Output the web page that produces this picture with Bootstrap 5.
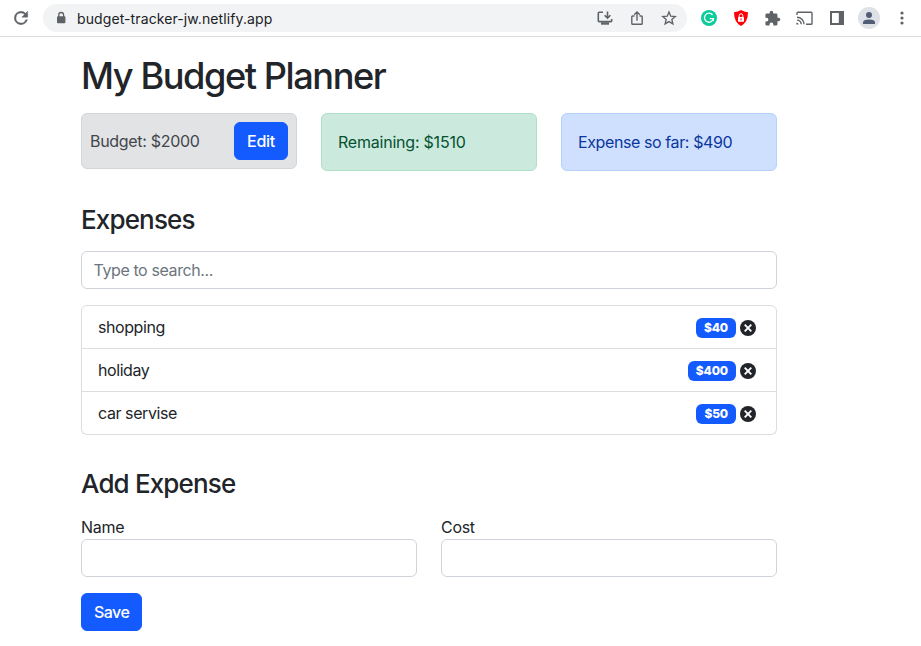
<!DOCTYPE html>
<html lang="en">
<head>
<meta charset="utf-8">
<meta name="viewport" content="width=device-width, initial-scale=1">
<title>My Budget Planner</title>
<link href="https://cdn.jsdelivr.net/npm/bootstrap@5.3.0/dist/css/bootstrap.min.css" rel="stylesheet">
<style>
body{font-family:Inter,"Liberation Sans",sans-serif;font-size:16px;color:#212529;letter-spacing:-.3px;overflow:hidden}
.browser-bar{height:37px;border-bottom:1px solid #dadce0;color:#5f6368;padding-left:11px}
.browser-bar svg{display:block;flex:none}
.address{width:644px;height:28px;margin:0 14px 0 12px;background:#f1f3f4;padding:0 10px}
.address-text{font-size:14px;color:#202124;letter-spacing:.1px;margin-left:8px}
.extensions{gap:15px}
.shield{margin-left:1px}
.profile{width:22px;height:22px;background:#dee1e6;margin:0 -1px 0 -2px}
.panel-icon{margin-left:1px}
.planner{width:720px;max-width:720px;margin-left:69px}
.planner-title{font-size:36.2px;line-height:43px;font-weight:540;letter-spacing:-1.45px;margin:18px 0 15px}
.section-title{font-size:26px;line-height:32px;font-weight:540;letter-spacing:-.85px;margin:33px 0 15px}
.box{border-radius:6px;margin:0;border:1px solid}
.box-budget{background:#e2e3e5;border-color:#d3d6d8;color:#41464b;padding:8px;height:56px}
.box-left{background:#cce9dd;border-color:#b0dfc9;color:#055130;height:58px;letter-spacing:-.22px}
.box-spent{background:#cfe0ff;border-color:#b3d1ff;color:#0a369d;height:58px;letter-spacing:-.4px}
.btn-primary{--bs-btn-bg:#145bff;--bs-btn-border-color:#145bff;font-weight:500;letter-spacing:-.55px}
.btn-edit{width:54px;letter-spacing:-.3px}
.btn,.form-control{height:38px;border-radius:6px}
.form-control{border-color:#ced4da;letter-spacing:-.4px;padding-left:11.5px}
.form-control::placeholder{color:#6c757d}
.list-group{--bs-list-group-border-color:#dcdddf;--bs-list-group-border-radius:6px}
.list-group-item{height:43px;padding:8px 20px 8px 16px;color:#212529;letter-spacing:-.42px}
.list-group-item:first-child,.list-group-item:last-child{height:43.5px}
.item-cost{padding-top:2px}
.cost-pill{background:#145bff;font-size:12px;font-weight:800;height:20px;line-height:12px;padding:4px 8px;border-radius:6px;letter-spacing:-.15px}
.save-row{margin-top:16px}
</style>
</head>
<body>
<header class="browser-bar d-flex align-items-center">
  <svg width="20" height="20" viewBox="0 0 24 24" fill="currentColor"><path d="M17.65 6.35A7.95 7.95 0 0 0 12 4a8 8 0 1 0 7.73 10h-2.08A6 6 0 1 1 12 6c1.66 0 3.14.69 4.22 1.78L13 11h7V4z" stroke="currentColor" stroke-width=".5"/></svg>
  <div class="address rounded-pill d-flex align-items-center">
    <svg width="16" height="16" viewBox="0 0 16 16"><rect x="4" y="6.3" width="8.4" height="7" rx="1" fill="#5f6368"/><path d="M5.8 7V4.9a2.4 2.4 0 0 1 4.8 0V7" fill="none" stroke="#5f6368" stroke-width="1.3"/></svg>
    <span class="address-text">budget-tracker-jw.netlify.app</span>
    <div class="ms-auto d-flex align-items-center gap-3">
      <svg width="16" height="16" viewBox="0 0 16 16" fill="none" stroke="currentColor" stroke-width="1.6"><path d="M6 2.3H2.2Q1.3 2.3 1.3 3.2v7.6q0 .8.9.8h11.6q.9 0 .9-.8V9M10.5 1.5v6M7.6 5.2l2.9 2.9 2.9-2.9"/><path d="M4 13.5h8" stroke-width="2.4"/></svg>
      <svg width="16" height="16" viewBox="0 0 16 16" fill="none" stroke="currentColor" stroke-width="1.4"><path d="M5.5 6H3.6q-.8 0-.8.8v6.6q0 .8.8.8h8.8q.8 0 .8-.8V6.8q0-.8-.8-.8h-1.9M8 10.7V2.3M5.2 4.7 8 1.9l2.8 2.8"/></svg>
      <svg width="16" height="16" viewBox="0 0 16 16" fill="none" stroke="currentColor" stroke-width="1.35"><path d="m8 2 1.75 4.15 4.5.38-3.42 2.95 1.03 4.4L8 11.55l-3.86 2.33 1.03-4.4-3.42-2.95 4.5-.38z"/></svg>
    </div>
  </div>
  <div class="extensions d-flex align-items-center">
    <svg width="16" height="16" viewBox="0 0 16 16"><circle cx="8" cy="8" r="8" fill="#0bcb9b"/><path d="M11.6 5A4.5 4.5 0 1 0 12.4 8.7H8.8M12.4 8.7l-.1 2.3" fill="none" stroke="#fff" stroke-width="1.3"/></svg>
    <svg class="shield" width="16" height="16" viewBox="0 0 16 16"><path d="M8 0q3 1.8 7 2.2 0 10-7 13.8Q1 12.2 1 2.2 5 1.8 8 0z" fill="#ff0008"/><rect x="5" y="7" width="6" height="4.8" rx=".5" fill="#fff"/><path d="M6.2 7V5.6a1.8 1.8 0 0 1 3.6 0V7" fill="none" stroke="#fff"/><path d="M8 8.3v2" stroke="#ff0008"/></svg>
    <svg width="17" height="17" viewBox="0 0 24 24" fill="currentColor"><path d="M20.5 11H19V7a2 2 0 0 0-2-2h-4V3.5a2.5 2.5 0 0 0-5 0V5H4a2 2 0 0 0-2 2v3.8h1.5a2.7 2.7 0 0 1 0 5.4H2V20a2 2 0 0 0 2 2h3.8v-1.5a2.7 2.7 0 0 1 5.4 0V22H17a2 2 0 0 0 2-2v-4h1.5a2.5 2.5 0 0 0 0-5z"/></svg>
    <svg width="17" height="17" viewBox="0 0 17 17" fill="none" stroke="currentColor" stroke-width="1.4"><path d="M1 5V3q0-.8.8-.8h13.4q.8 0 .8.8v10.4q0 .8-.8.8H10M1 7.3a7 7 0 0 1 7 7M1 10.1a4.2 4.2 0 0 1 4.2 4.2"/><path d="M.4 12.4a2.1 2.1 0 0 1 2.1 2.1H.4z" fill="currentColor" stroke="none"/></svg>
    <svg class="panel-icon" width="16" height="16" viewBox="0 0 16 16" fill="currentColor"><path fill-rule="evenodd" d="M1 1h14v14H1zM3 3v10h6.8V3z"/></svg>
    <div class="profile rounded-circle d-flex align-items-center justify-content-center"><svg width="14" height="14" viewBox="0 0 14 14" fill="#515d75"><circle cx="7" cy="4" r="3"/><path d="M1 13v-1.8Q1 8.8 7 8.5q6 .3 6 2.7V13z"/></svg></div>
    <svg width="16" height="16" viewBox="0 0 16 16" fill="currentColor"><circle cx="8" cy="3" r="1.6"/><circle cx="8" cy="8" r="1.6"/><circle cx="8" cy="13" r="1.6"/></svg>
  </div>
</header>

<main class="container planner">
  <h1 class="planner-title">My Budget Planner</h1>
  <div class="row align-items-start">
    <div class="col-4"><div class="alert box box-budget d-flex align-items-center justify-content-between"><span>Budget: $2000</span><button class="btn btn-primary btn-edit" type="button">Edit</button></div></div>
    <div class="col-4"><div class="alert box box-left d-flex align-items-center"><span>Remaining: $1510</span></div></div>
    <div class="col-4"><div class="alert box box-spent d-flex align-items-center"><span>Expense so far: $490</span></div></div>
  </div>

  <h3 class="section-title">Expenses</h3>
  <input class="form-control mb-3" type="text" placeholder="Type to search...">
  <ul class="list-group">
    <li class="list-group-item d-flex align-items-center justify-content-between"><span>shopping</span><div class="item-cost d-flex align-items-center gap-1"><span class="badge cost-pill">$40</span><svg width="16" height="16" viewBox="0 0 16 16"><circle cx="8" cy="8" r="8" fill="#212529"/><path d="m4.7 4.7 6.6 6.6m0-6.6-6.6 6.6" stroke="#fff" stroke-width="1.9"/></svg></div></li>
    <li class="list-group-item d-flex align-items-center justify-content-between"><span>holiday</span><div class="item-cost d-flex align-items-center gap-1"><span class="badge cost-pill">$400</span><svg width="16" height="16" viewBox="0 0 16 16"><circle cx="8" cy="8" r="8" fill="#212529"/><path d="m4.7 4.7 6.6 6.6m0-6.6-6.6 6.6" stroke="#fff" stroke-width="1.9"/></svg></div></li>
    <li class="list-group-item d-flex align-items-center justify-content-between"><span>car servise</span><div class="item-cost d-flex align-items-center gap-1"><span class="badge cost-pill">$50</span><svg width="16" height="16" viewBox="0 0 16 16"><circle cx="8" cy="8" r="8" fill="#212529"/><path d="m4.7 4.7 6.6 6.6m0-6.6-6.6 6.6" stroke="#fff" stroke-width="1.9"/></svg></div></li>
  </ul>

  <h3 class="section-title">Add Expense</h3>
  <form>
    <div class="row">
      <div class="col-6"><label class="d-block" for="name">Name</label><input class="form-control" id="name" type="text"></div>
      <div class="col-6"><label class="d-block" for="cost">Cost</label><input class="form-control" id="cost" type="text"></div>
    </div>
    <button class="btn btn-primary save-row" type="button">Save</button>
  </form>
</main>
<script src="https://cdn.jsdelivr.net/npm/bootstrap@5.3.0/dist/js/bootstrap.bundle.min.js"></script>
</body>
</html>
